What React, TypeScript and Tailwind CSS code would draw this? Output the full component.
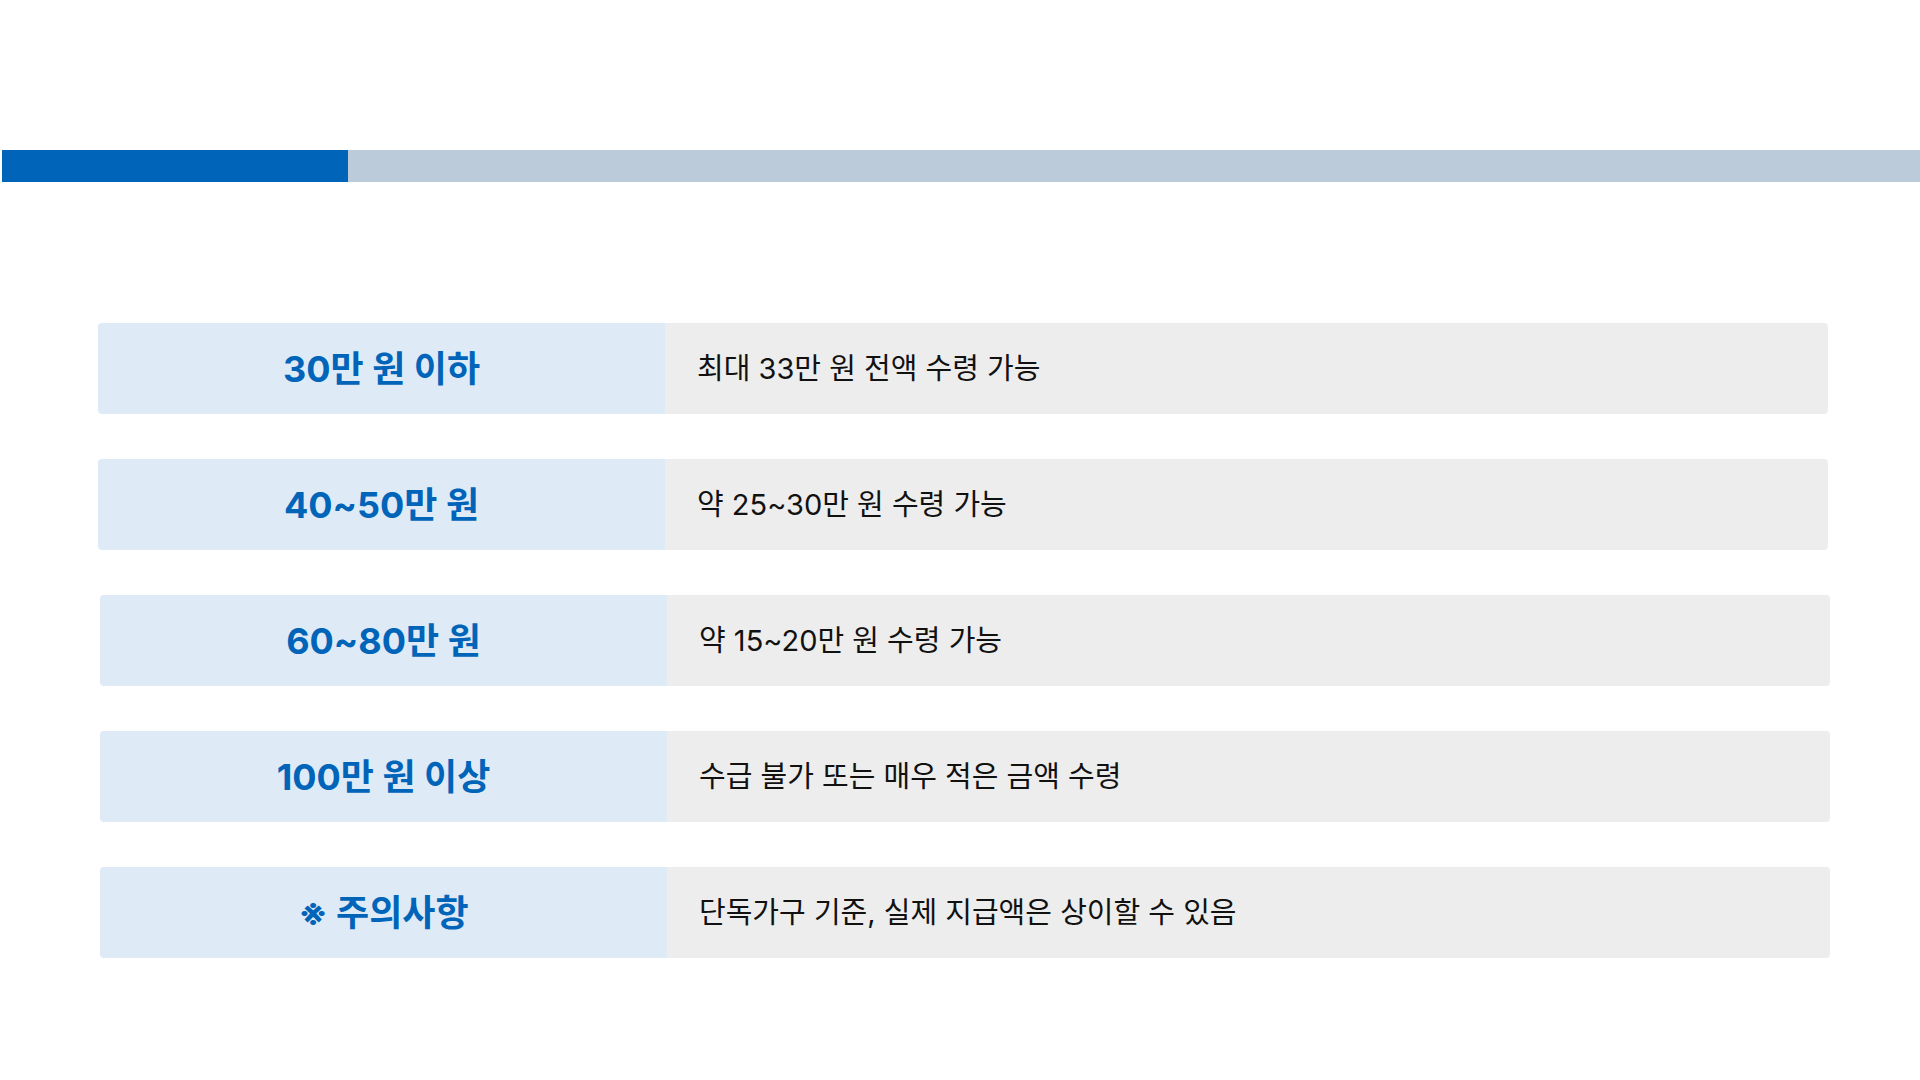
import React from 'react';

const rows = [
  { label: '30만 원 이하', desc: '최대 33만 원 전액 수령 가능', shift: false },
  { label: '40~50만 원', desc: '약 25~30만 원 수령 가능', shift: false },
  { label: '60~80만 원', desc: '약 15~20만 원 수령 가능', shift: true },
  { label: '100만 원 이상', desc: '수급 불가 또는 매우 적은 금액 수령', shift: true },
  { label: '※ 주의사항', desc: '단독가구 기준, 실제 지급액은 상이할 수 있음', shift: true },
];

export default function App() {
  return (
    <div
      className="w-[1920px] h-[1080px] bg-white overflow-hidden"
      style={{ fontFamily: 'Inter, "Noto Sans CJK KR", sans-serif' }}
    >
      {/* 진행 바 */}
      <div className="pt-[150px] pl-[2px] flex">
        <div className="h-[32px] w-[346px] bg-[#0064b9]" />
        <div className="h-[32px] flex-1 bg-[#bccbda]" />
      </div>

      <div className="mt-[141px] flex flex-col gap-[45px] pl-[98px] pr-[92px]">
        {rows.map((r) => (
          <div
            key={r.label}
            className={`flex h-[91px] rounded overflow-hidden ${r.shift ? 'ml-[2px] -mr-[2px]' : ''}`}
          >
            <div className="w-[567px] shrink-0 bg-[#deeaf6] flex items-center justify-center">
              <span className="text-[36px] font-bold text-[#0064b9]">{r.label}</span>
            </div>
            <div className="flex-1 bg-[#ededed] flex items-center pl-[32px]">
              <span className="text-[29px] text-[#111111]">{r.desc}</span>
            </div>
          </div>
        ))}
      </div>
    </div>
  );
}
